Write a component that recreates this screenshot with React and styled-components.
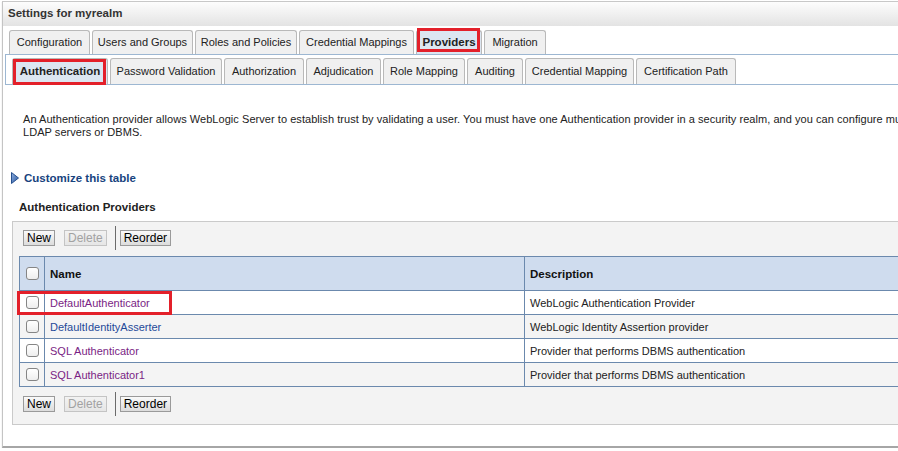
import React from "react";
import styled, { createGlobalStyle, css } from "styled-components";

const GlobalStyle = createGlobalStyle`
  html, body { margin: 0; padding: 0; background: #fff; overflow: hidden; }
  body {
    font-family: "Liberation Sans", Arial, sans-serif;
    font-size: 11px;
    color: #222;
  }
`;

const RED = "#e3202a";

const Frame = styled.div`
  margin: 1px 0 0 2px;
  width: 1100px;
  border-left: 1px solid #c4c4c4;
  border-top: 1px solid #c8c8c8;
  border-bottom: 2px solid #a6a6a6;
  box-shadow: 0 1px 1px #d0d0d0;
`;

const Header = styled.div`
  height: 24px;
  line-height: 23px;
  padding-left: 5px;
  font-weight: bold;
  font-size: 11.5px;
  color: #333;
  background: linear-gradient(#fdfdfd, #e3e3e3);
`;

const TabRow = styled.div`
  display: flex;
  gap: 2px;
  padding: 4px 0 0 6px;
`;

const markCss = css`
  &::after {
    content: "";
    position: absolute;
    top: ${(p) => p.$mark.t}px;
    left: ${(p) => p.$mark.l}px;
    right: ${(p) => p.$mark.r}px;
    bottom: ${(p) => p.$mark.b}px;
    border: 3px solid ${RED};
  }
`;

const Tab = styled.div`
  position: relative;
  box-sizing: border-box;
  width: ${(p) => p.$w}px;
  height: ${(p) => p.$h}px;
  padding-bottom: ${(p) => p.$lift || 0}px;
  display: flex;
  align-items: center;
  justify-content: center;
  border: 1px solid #b9b9b9;
  border-bottom: none;
  border-radius: 3px 3px 0 0;
  background: ${(p) => (p.$active ? "#dce6f1" : "#f0f0f0")};
  font-weight: ${(p) => (p.$active ? "bold" : "normal")};
  font-size: ${(p) => (p.$active ? "11.5px" : "11px")};
  color: #222;
  white-space: nowrap;
  ${(p) => p.$mark && markCss}
`;

const SubStrip = styled.div`
  margin-left: 2px;
  border: 1px solid #9db7d2;
  border-right: none;
  padding: 3px 0 0 6px;
  display: flex;
  gap: 2px;
`;

const Content = styled.div`
  padding: 28px 0 21px 0;
`;

const Description = styled.p`
  margin: 0 0 0 20px;
  line-height: 13px;
  white-space: nowrap;
  letter-spacing: 0.05px;
  color: #222;
`;

const Customize = styled.div`
  margin: 32px 0 0 8px;
  display: flex;
  align-items: center;
  gap: 5px;
  height: 14px;
  font-weight: bold;
  font-size: 11.5px;
  color: #17437e;
`;

const Heading = styled.div`
  margin: 15px 0 0 16px;
  line-height: 14px;
  font-weight: bold;
  font-size: 11.5px;
  color: #222;
`;

const Panel = styled.div`
  margin: 7px 0 0 9px;
  border: 1px solid #cacaca;
  background: #f3f3f3;
  padding: 4px 0 8px 6px;
`;

const Toolbar = styled.div`
  display: flex;
  align-items: center;
  height: 24px;
  padding-left: 4px;
  margin-top: ${(p) => p.$top || 0}px;
`;

const Button = styled.button`
  box-sizing: border-box;
  height: 16px;
  padding: 0 3px;
  margin: 0;
  margin-left: ${(p) => p.$ml || 0}px;
  font-family: "Liberation Sans", Arial, sans-serif;
  font-size: 12px;
  line-height: 14px;
  border: 1px solid ${(p) => (p.disabled ? "#c4c4c4" : "#9a9a9a")};
  border-radius: 0;
  color: ${(p) => (p.disabled ? "#a2a2a2" : "#000")};
  background: ${(p) =>
    p.disabled
      ? "linear-gradient(#f2f2f2, #e6e6e6)"
      : "linear-gradient(#fafafa, #dcdcdc)"};
`;

const Separator = styled.span`
  width: 1px;
  height: 24px;
  background: #6b6b6b;
  margin: 0 4px 0 8px;
`;

const Table = styled.table`
  margin-top: 6px;
  border-collapse: collapse;
  table-layout: fixed;
  width: 1000px;
  border: 1px solid #6b89ad;
`;

const HeadCell = styled.th`
  height: 33px;
  padding: 0 0 0 5px;
  background: #cfdcee;
  border: 1px solid #6b89ad;
  text-align: left;
  font-weight: bold;
  font-size: 11.5px;
  color: #111;
`;

const Row = styled.tr`
  background: ${(p) => (p.$alt ? "#f4f4f4" : "#fff")};
`;

const Cell = styled.td`
  position: relative;
  height: 23px;
  padding: 0 0 0 5px;
  border: 1px solid #6b89ad;
  color: #222;
  white-space: nowrap;
  ${(p) =>
    p.$marked &&
    css`
      &::after {
        content: "";
        position: absolute;
        left: -3px;
        top: 0;
        width: 155px;
        height: 24px;
        box-sizing: border-box;
        border: 3px solid ${RED};
      }
    `}
`;

const BoxCell = styled(Cell)`
  padding: 0;
  text-align: center;
`;

const HeadBoxCell = styled(HeadCell)`
  padding: 0;
  text-align: center;
`;

const Check = styled.span`
  display: inline-block;
  vertical-align: middle;
  box-sizing: border-box;
  width: 13px;
  height: 13px;
  border: 1px solid #858585;
  border-radius: 3px;
  background: linear-gradient(#ffffff, #eeeeee);
`;

const Link = styled.a`
  color: ${(p) => (p.$visited ? "#7a1e84" : "#1f4a99")};
  text-decoration: none;
  font-size: 11px;
`;

const Triangle = () => (
  <svg width="8" height="12" viewBox="0 0 8 12">
    <defs>
      <linearGradient id="tri" x1="0" y1="0" x2="1" y2="1">
        <stop offset="0" stopColor="#8fb0e0" />
        <stop offset="1" stopColor="#2a569e" />
      </linearGradient>
    </defs>
    <polygon points="0.5,0.5 7.5,6 0.5,11.5" fill="url(#tri)" stroke="#26508f" strokeWidth="1" />
  </svg>
);

const mainTabs = [
  { label: "Configuration", w: 81 },
  { label: "Users and Groups", w: 101 },
  { label: "Roles and Policies", w: 102 },
  { label: "Credential Mappings", w: 115 },
  { label: "Providers", w: 66, active: true, mark: { t: -3, l: 0, r: 1, b: 2 } },
  { label: "Migration", w: 62 },
];

const subTabs = [
  { label: "Authentication", w: 96, active: true, mark: { t: 0, l: 0, r: 1, b: -1 } },
  { label: "Password Validation", w: 112 },
  { label: "Authorization", w: 80 },
  { label: "Adjudication", w: 75 },
  { label: "Role Mapping", w: 82 },
  { label: "Auditing", w: 56 },
  { label: "Credential Mapping", w: 109 },
  { label: "Certification Path", w: 100 },
];

const providers = [
  { name: "DefaultAuthenticator", desc: "WebLogic Authentication Provider", visited: true, marked: true },
  { name: "DefaultIdentityAsserter", desc: "WebLogic Identity Assertion provider", visited: false },
  { name: "SQL Authenticator", desc: "Provider that performs DBMS authentication", visited: true },
  { name: "SQL Authenticator1", desc: "Provider that performs DBMS authentication", visited: true },
];

const Buttons = ({ top }) => (
  <Toolbar $top={top}>
    <Button>New</Button>
    <Button $ml={9} disabled>
      Delete
    </Button>
    <Separator />
    <Button>Reorder</Button>
  </Toolbar>
);

export default function App() {
  return (
    <>
      <GlobalStyle />
      <Frame>
        <Header>Settings for myrealm</Header>
        <TabRow>
          {mainTabs.map((t) => (
            <Tab key={t.label} $w={t.w} $h={24} $lift={2} $active={t.active} $mark={t.mark}>
              {t.label}
            </Tab>
          ))}
        </TabRow>
        <SubStrip>
          {subTabs.map((t) => (
            <Tab key={t.label} $w={t.w} $h={26} $lift={1} $active={t.active} $mark={t.mark}>
              {t.label}
            </Tab>
          ))}
        </SubStrip>
        <Content>
          <Description>
            An Authentication provider allows WebLogic Server to establish trust by validating a user. You must have one
            Authentication provider in a security realm, and you can configure multiple Authentication providers in a
            security realm. Different types of Authentication providers are designed to access different data stores, such as
            <br />
            LDAP servers or DBMS.
          </Description>
          <Customize>
            <Triangle />
            Customize this table
          </Customize>
          <Heading>Authentication Providers</Heading>
          <Panel>
            <Buttons top={0} />
            <Table>
              <colgroup>
                <col style={{ width: 25 }} />
                <col style={{ width: 480 }} />
                <col />
              </colgroup>
              <thead>
                <tr>
                  <HeadBoxCell>
                    <Check />
                  </HeadBoxCell>
                  <HeadCell>Name</HeadCell>
                  <HeadCell>Description</HeadCell>
                </tr>
              </thead>
              <tbody>
                {providers.map((p, i) => (
                  <Row key={p.name} $alt={i % 2 === 1}>
                    <BoxCell $marked={p.marked}>
                      <Check />
                    </BoxCell>
                    <Cell>
                      <Link href="#" $visited={p.visited}>
                        {p.name}
                      </Link>
                    </Cell>
                    <Cell>{p.desc}</Cell>
                  </Row>
                ))}
              </tbody>
            </Table>
            <Buttons top={5} />
          </Panel>
        </Content>
      </Frame>
    </>
  );
}
